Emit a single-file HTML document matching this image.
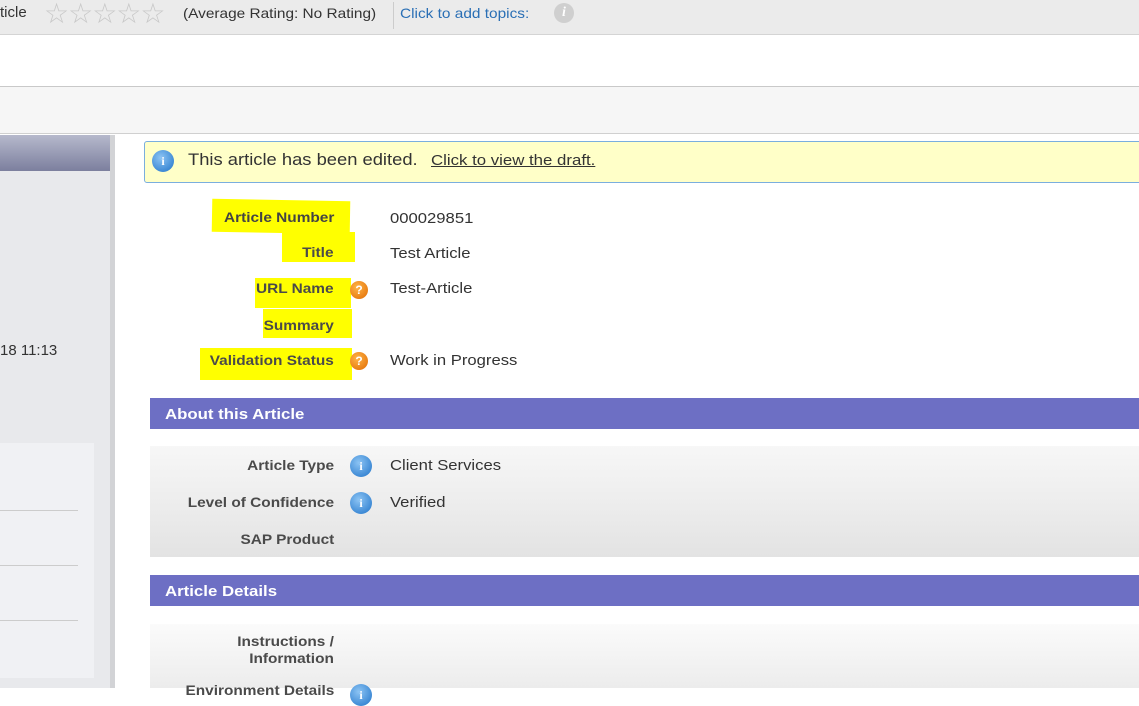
<!DOCTYPE html>
<html><head><meta charset="utf-8"><style>
*{margin:0;padding:0;box-sizing:border-box}
body{width:1139px;height:688px;overflow:hidden;background:#fff;font-family:"Liberation Sans",Arial,sans-serif;position:relative;color:#333}
.a{position:absolute;white-space:nowrap}
.lbl{position:absolute;right:805px;font-weight:bold;font-size:14px;color:#4a4a4a;text-align:right;white-space:nowrap;transform:scaleX(1.1);transform-origin:right center}
.val{position:absolute;left:390px;font-size:15px;color:#333;transform:scaleX(1.11);transform-origin:left center;white-space:nowrap}
.hl{position:absolute;background:#ffff00}
.q{position:absolute;width:18px;height:18px;border-radius:50%;background:radial-gradient(circle at 40% 35%,#ffb347,#e06a00);color:#fff;font-size:12px;font-weight:bold;text-align:center;line-height:18px}
.i{position:absolute;width:22px;height:22px;border-radius:50%;background:radial-gradient(circle at 40% 35%,#8cc4f4,#1f73c9);color:#fff;font-size:12px;font-weight:bold;text-align:center;line-height:22px;font-family:"Liberation Serif",serif}
.sec{position:absolute;left:150px;width:989px;height:31px;background:#6d6fc4;color:#fff;font-weight:bold;font-size:15px;padding:8px 0 0 15px}
.sec span{display:inline-block;transform:scaleX(1.12);transform-origin:left center}
</style></head><body>
<div class="a" style="left:0;top:0;width:1139px;height:35px;background:#ebebeb;border-bottom:1px solid #d4d4d4"></div>
<div class="a" style="left:0;top:4px;font-size:15px;color:#333">ticle</div>
<div class="a" style="left:44px;top:-3px;font-size:28px;color:#c8c8c8;letter-spacing:-1px">☆☆☆☆☆</div>
<div class="a" style="left:183px;top:5px;font-size:14px;color:#333;transform:scaleX(1.1);transform-origin:left">(Average Rating: No Rating)</div>
<div class="a" style="left:393px;top:2px;width:1px;height:27px;background:#ccc"></div>
<div class="a" style="left:400px;top:5px;font-size:14px;color:#2a6fb5;transform:scaleX(1.1);transform-origin:left">Click to add topics:</div>
<div class="a" style="left:554px;top:3px;width:20px;height:20px;border-radius:50%;background:#cfcfcf;color:#fff;font-weight:bold;font-style:italic;text-align:center;font-size:14px;line-height:20px;font-family:'Liberation Serif',serif">i</div>
<div class="a" style="left:0;top:86px;width:1139px;height:48px;background:#f6f6f6;border-top:1px solid #c9c9c9;border-bottom:1px solid #d0d0d0"></div>
<div class="a" style="left:0;top:135px;width:110px;height:553px;background:#e8e9ec"></div>
<div class="a" style="left:110px;top:135px;width:5px;height:553px;background:#d2d3d6"></div>
<div class="a" style="left:0;top:135px;width:110px;height:36px;background:linear-gradient(#b6b9cc,#7c7f9e)"></div>
<div class="a" style="left:0;top:342px;font-size:15px;color:#333">18 11:13</div>
<div class="a" style="left:0;top:443px;width:94px;height:235px;background:#f0f1f4"></div>
<div class="a" style="left:0;top:510px;width:78px;height:1px;background:#ccc"></div>
<div class="a" style="left:0;top:565px;width:78px;height:1px;background:#ccc"></div>
<div class="a" style="left:0;top:620px;width:78px;height:1px;background:#ccc"></div>

<div class="a" style="left:144px;top:141px;width:1000px;height:42px;background:#ffffc8;border:1px solid #7aaede;border-radius:3px"></div>
<div class="i" style="left:152px;top:150px">i</div>
<div class="a" style="left:188px;top:150px;font-size:17px;color:#333;transform:scaleX(1.08);transform-origin:left">This article has been edited.</div>
<div class="a" style="left:431px;top:152px;font-size:15px;color:#333;text-decoration:underline;transform:scaleX(1.12);transform-origin:left">Click to view the draft.</div>

<div class="hl" style="left:212px;top:200px;width:138px;height:33px;transform:rotate(1deg)"></div>
<div class="hl" style="left:282px;top:232px;width:73px;height:30px"></div>
<div class="hl" style="left:255px;top:278px;width:96px;height:30px"></div>
<div class="hl" style="left:263px;top:309px;width:89px;height:29px"></div>
<div class="hl" style="left:200px;top:348px;width:152px;height:32px"></div>
<div class="lbl" style="top:209px;color:#444">Article Number</div>
<div class="lbl" style="top:244px">Title</div>
<div class="lbl" style="top:280px">URL Name</div>
<div class="lbl" style="top:317px">Summary</div>
<div class="lbl" style="top:352px">Validation Status</div>
<div class="q" style="left:350px;top:281px">?</div>
<div class="q" style="left:350px;top:352px">?</div>
<div class="val" style="top:210px">000029851</div>
<div class="val" style="top:245px">Test Article</div>
<div class="val" style="top:280px">Test-Article</div>
<div class="val" style="top:352px">Work in Progress</div>

<div class="sec" style="top:398px"><span>About this Article</span></div>
<div class="a" style="left:150px;top:446px;width:989px;height:111px;background:linear-gradient(#f7f7f7,#e3e3e3)"></div>
<div class="lbl" style="top:457px">Article Type</div>
<div class="lbl" style="top:494px">Level of Confidence</div>
<div class="lbl" style="top:531px">SAP Product</div>
<div class="i" style="left:350px;top:455px">i</div>
<div class="i" style="left:350px;top:492px">i</div>
<div class="val" style="top:457px">Client Services</div>
<div class="val" style="top:494px">Verified</div>

<div class="sec" style="top:575px"><span>Article Details</span></div>
<div class="a" style="left:150px;top:624px;width:989px;height:64px;background:linear-gradient(#fbfbfb,#ececec)"></div>
<div class="lbl" style="top:633px;line-height:17px">Instructions /<br>Information</div>
<div class="lbl" style="top:682px">Environment Details</div>
<div class="i" style="left:350px;top:684px">i</div>
</body></html>
